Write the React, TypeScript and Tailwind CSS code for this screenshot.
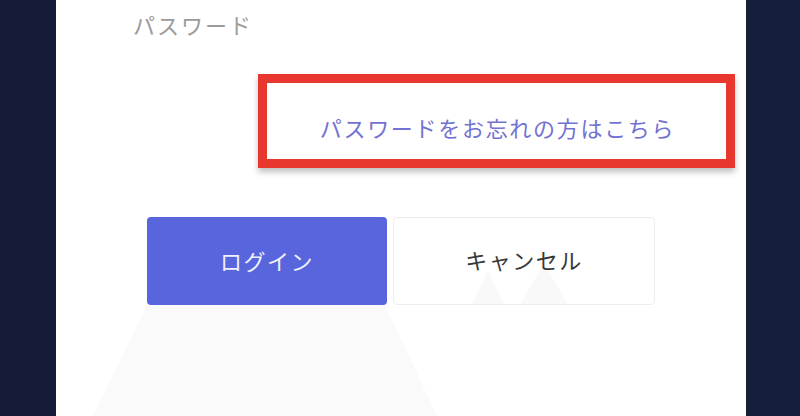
const jp = "font-['Noto_Sans_CJK_JP','Noto_Sans',sans-serif]";

export default function App() {
  return (
    <div className={`flex h-[416px] w-[800px] overflow-hidden bg-[#151d3a] ${jp}`}>
      <div className="w-[56px] shrink-0 bg-[#141c38]" />
      <div className="relative flex w-[690px] shrink-0 flex-col bg-white">
        {/* faint light shapes behind the buttons */}
        <svg className="absolute left-0 top-0" width="690" height="416" viewBox="0 0 690 416">
          <polygon points="91,305 329,305 381,416 37,416" fill="#fafafb" />
          <polygon points="416,305 432,270 448,305" fill="#f9f9fa" />
          <polygon points="464,305 488,263 512,305" fill="#f9f9fa" />
        </svg>

        <div className="relative pl-[77px] pt-[11px] text-[22px] leading-[26px] tracking-[2px] text-[#9b9b9b]">
          パスワード
        </div>

        <div className="relative ml-[202px] mt-[37px] flex h-[94px] w-[477px] items-center justify-center border-[9px] border-[#e8372e] pt-[11px] shadow-[0_4px_6px_rgba(0,0,0,0.25)]">
          <span className="pl-[2px] text-[22px] leading-[26px] tracking-[1.7px] text-[#7272d2]">パスワードをお忘れの方はこちら</span>
        </div>

        <div className="relative ml-[91px] mt-[49px] flex gap-[6px]">
          <button className="flex h-[88px] w-[240px] items-center justify-center rounded-[4px] bg-[#5865dc] pb-[2px] text-[22px] tracking-[1.5px] text-[#eef0fb]">
            ログイン
          </button>
          <button className="flex h-[88px] w-[262px] items-center justify-center rounded-[4px] border border-[#ececf2] bg-transparent pb-[4px] text-[22px] tracking-[1.5px] text-[#383838]">
            キャンセル
          </button>
        </div>
      </div>
      <div className="flex-1 bg-[#151e3b]" />
    </div>
  );
}
